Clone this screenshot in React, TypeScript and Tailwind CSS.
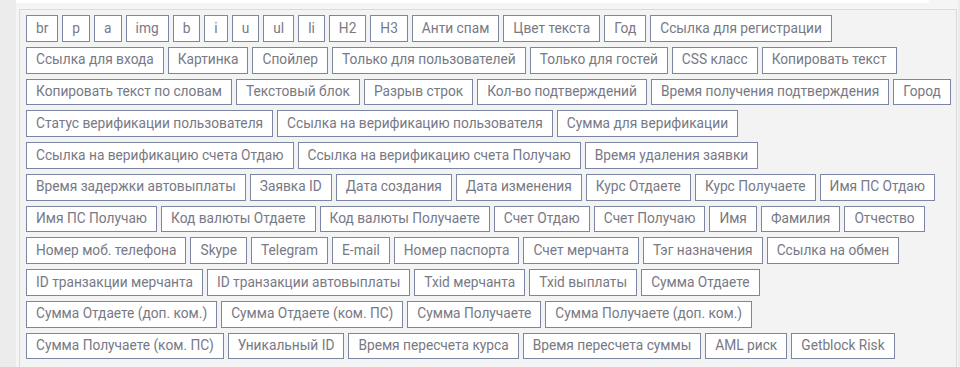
import React from "react";

const rows: string[][] = [
  ["br", "p", "a", "img", "b", "i", "u", "ul", "li", "H2", "H3", "Анти спам", "Цвет текста", "Год", "Ссылка для регистрации"],
  ["Ссылка для входа", "Картинка", "Спойлер", "Только для пользователей", "Только для гостей", "CSS класс", "Копировать текст"],
  ["Копировать текст по словам", "Текстовый блок", "Разрыв строк", "Кол-во подтверждений", "Время получения подтверждения", "Город"],
  ["Статус верификации пользователя", "Ссылка на верификацию пользователя", "Сумма для верификации"],
  ["Ссылка на верификацию счета Отдаю", "Ссылка на верификацию счета Получаю", "Время удаления заявки"],
  ["Время задержки автовыплаты", "Заявка ID", "Дата создания", "Дата изменения", "Курс Отдаете", "Курс Получаете", "Имя ПС Отдаю"],
  ["Имя ПС Получаю", "Код валюты Отдаете", "Код валюты Получаете", "Счет Отдаю", "Счет Получаю", "Имя", "Фамилия", "Отчество"],
  ["Номер моб. телефона", "Skype", "Telegram", "E-mail", "Номер паспорта", "Счет мерчанта", "Тэг назначения", "Ссылка на обмен"],
  ["ID транзакции мерчанта", "ID транзакции автовыплаты", "Txid мерчанта", "Txid выплаты", "Сумма Отдаете"],
  ["Сумма Отдаете (доп. ком.)", "Сумма Отдаете (ком. ПС)", "Сумма Получаете", "Сумма Получаете (доп. ком.)"],
  ["Сумма Получаете (ком. ПС)", "Уникальный ID", "Время пересчета курса", "Время пересчета суммы", "AML риск", "Getblock Risk"],
];

export default function App() {
  return (
    <div
      className="w-[960px] h-[367px] overflow-hidden bg-[#ececec] pl-[16px] pr-[2px]"
      style={{ fontFamily: "Roboto, 'Liberation Sans', sans-serif" }}
    >
      <div className="h-full bg-[#f5f5f5] flex flex-col">
        <div className="h-[3px] w-[913px] bg-white shrink-0" />
        <div className="ml-[3px] mt-[6px] w-[938px] flex-1 border-l border-t border-r border-[#dadada] bg-[#f3f3f3] pl-[6px] pt-[5px]">
          <div className="flex flex-col gap-[5px]">
            {rows.map((row, i) => (
              <div key={i} className="flex gap-x-[4px]">
                {row.map((t) => (
                  <span
                    key={t}
                    className="h-[26.75px] flex items-center px-[9px] border border-[#7a86a4] bg-white text-[13.72px] leading-none text-[#777985] whitespace-nowrap"
                  >
                    {t}
                  </span>
                ))}
              </div>
            ))}
          </div>
        </div>
      </div>
    </div>
  );
}
